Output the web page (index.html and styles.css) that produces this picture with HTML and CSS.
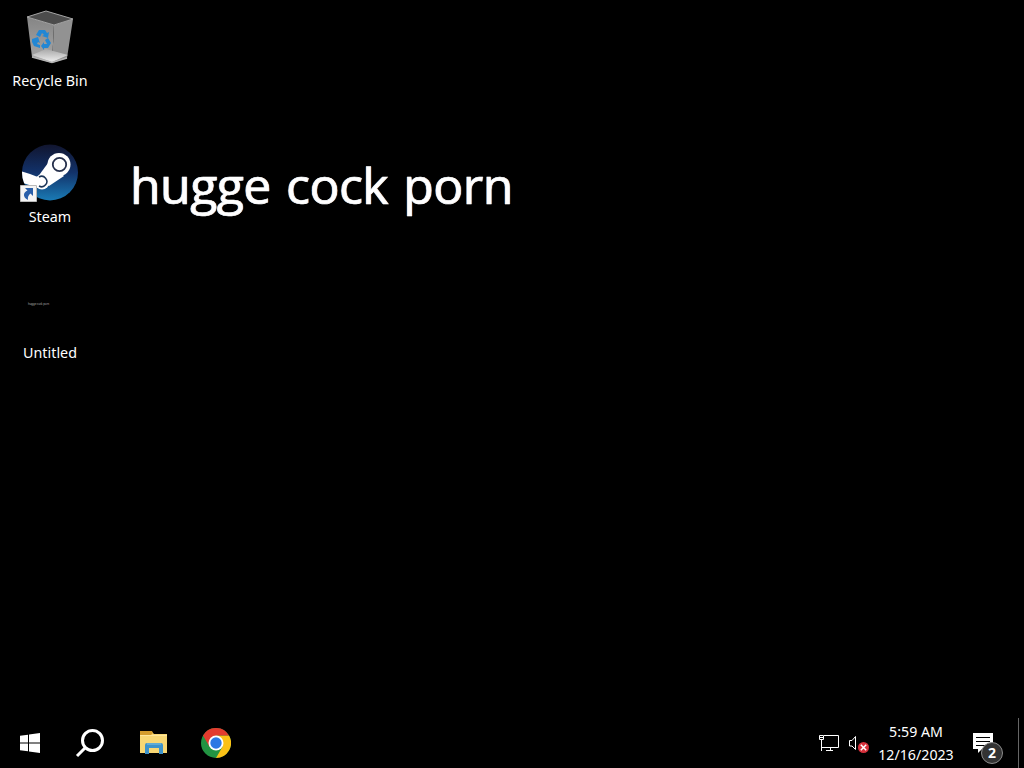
FILE: index.html
```
<!DOCTYPE html>
<html lang="en">

<head>
    <meta charset="UTF-8">
    <title>Desktop</title>
    <link rel="stylesheet" href="styles.css">
</head>

<body>
    <div class="desktop">
        <!-- desktop icons -->
        <div class="icons">
            <div class="icon">
                <svg class="icon-img" width="60" height="60" viewBox="0 0 60 60">
                    <defs>
                        <linearGradient id="binLeft" x1="0" y1="0" x2="0" y2="1">
                            <stop offset="0" stop-color="#858585" />
                            <stop offset="1" stop-color="#a9a9a9" />
                        </linearGradient>
                        <linearGradient id="binFloor" x1="0" y1="0" x2="0" y2="1">
                            <stop offset="0" stop-color="#a8a8a8" />
                            <stop offset="1" stop-color="#eeeeee" />
                        </linearGradient>
                    </defs>
                    <path d="M7 10 34 18 32 56 12 50Z" fill="url(#binLeft)" />
                    <path d="M34 18 53 12 47 51 32 56Z" fill="#929292" />
                    <path d="M7 10 26 4 53 12 34 18Z" fill="#4c4c4c" stroke="#a5a5a5" />
                    <path d="M12 48 26 42 48 48 32 55Z" fill="url(#binFloor)" />
                    <path d="M12 50 32 55.500 47 51" fill="none" stroke="#b4b4b4" stroke-width="1.500" />
                    <g fill="#2287d4">
                        <path d="M16 28 19 23 25 23 27 26 29 25 28 31 22 29 24 28 22 26 20 30Z" />
                        <path d="M12 32 18 30 20 36 18 35 17 37 20 38V41L14 39 12 35Z" />
                        <path d="M21 39 24 35 24 37 27 37 25 33 28 31 31 36 28 41 24 41 24 43Z" />
                    </g>
                </svg>
                <span class="icon-name">Recycle Bin</span>
            </div>
            <div class="icon">
                <svg class="icon-img" width="60" height="60" viewBox="0 0 60 60">
                    <defs>
                        <linearGradient id="steamBg" x1="0" y1="0" x2="0" y2="1">
                            <stop offset="0" stop-color="#11152f" />
                            <stop offset=".5" stop-color="#12326a" />
                            <stop offset="1" stop-color="#1a7bb5" />
                        </linearGradient>
                        <clipPath id="steamClip">
                            <circle cx="30" cy="29.500" r="28" />
                        </clipPath>
                    </defs>
                    <circle cx="30" cy="29.500" r="28" fill="url(#steamBg)" />
                    <g clip-path="url(#steamClip)">
                        <path d="M0 28 10 31 23 36 22 46 0 39Z" fill="#fff" />
                        <path d="M28 20 44 33 29 43 17 35Z" fill="#fff" />
                        <circle cx="22" cy="39" r="7.500" fill="#fff" />
                        <circle cx="39" cy="21.500" r="11.500" fill="#fff" />
                        <circle cx="39.500" cy="21.500" r="6.700" fill="none" stroke="#26304c" stroke-width="1.800" />
                        <path d="M19 34A5.200 5.200 0 1 1 19 43" fill="none" stroke="#1c3558" stroke-width="1.500" />
                    </g>
                    <!-- shortcut arrow -->
                    <path d="M.5 42.500h16v16H.5z" fill="#f4f4f4" stroke="#b9b9b9" />
                    <path d="M5 45h8v8l-2.500-2.500C8.500 52 7.500 54 8 57 2 54 3.500 49 7.500 47.500Z" fill="#2a5fa9" />
                </svg>
                <span class="icon-name">Steam</span>
            </div>
            <div class="icon">
                <div class="icon-img thumb">hugge cock porn</div>
                <span class="icon-name">Untitled</span>
            </div>
        </div>
        <!-- wallpaper text -->
        <div class="wallpaper">hugge cock porn</div>
    </div>

    <div class="taskbar">
        <div class="task start">
            <svg width="20" height="20" viewBox="0 0 20 20" fill="#fff">
                <path d="M0 2.800 8 1.700V9.500H0zM9 1.500 20 0V9.500H9zM0 10.500H8V18.300L0 17.200zM9 10.500H20V20L9 18.500z" />
            </svg>
        </div>
        <div class="task search">
            <svg width="30" height="30" viewBox="0 0 30 30" fill="none" stroke="#fff" stroke-width="3">
                <circle cx="17.500" cy="12.500" r="10" />
                <path d="M10.500 19.500 2 28" />
            </svg>
        </div>
        <div class="task explorer">
            <svg width="28" height="26" viewBox="0 0 28 26">
                <path d="M0 2h12l2 2h13v19H0z" fill="#f8d774" />
                <path d="M0 1h12l1 2-2 2H0z" fill="#d49c2c" />
                <path d="M0 5h27v1H0z" fill="#ffe69b" />
                <path d="M5 24V15q0-2 2-2h14q2 0 2 2v9h-4v-6H9v6z" fill="#3e93cb" />
                <path d="M7 13h14v2H7z" fill="#5fabd6" />
            </svg>
        </div>
        <div class="task chrome">
            <svg width="30" height="30" viewBox="0 0 30 30">
                <circle cx="15" cy="15" r="15" fill="#229342" />
                <path d="M15 7.500H28A15 15 0 0 1 15 30L21.500 18.750Z" fill="#fbc116" />
                <path d="M15 7.500H28A15 15 0 0 0 2 7.500L8.500 18.750Z" fill="#e33b2e" />
                <circle cx="15" cy="15" r="7.500" fill="#fff" />
                <circle cx="15" cy="15" r="5.700" fill="#2b78e4" />
            </svg>
        </div>

        <div class="tray">
            <svg class="network" width="21" height="18" viewBox="0 0 21 18" fill="none" stroke="#fff">
                <path d="M5 1.500H19.500V13.500H2.500V6M11.500 14v3M7 16.500h7M2.500 13v4" />
                <path d="M.5 1.500h4v4h-4zM1 3.500h3" />
            </svg>
            <svg class="volume" width="22" height="20" viewBox="0 0 22 20">
                <path d="M1.500 7.500H4L7.500 3.500V16.500L4 13H1.500z" fill="none" stroke="#fff" />
                <circle cx="15.500" cy="14.500" r="5.500" fill="#d5303b" />
                <path d="M12.800 11.800 18.200 17.200M18.200 11.800 12.800 17.200" stroke="#fff" stroke-width="1.500" />
            </svg>
            <div class="clock">
                <span class="time">5:59 AM</span>
                <span class="date">12/16/2023</span>
            </div>
            <div class="notice">
                <svg width="20" height="20" viewBox="0 0 20 20">
                    <path d="M0 0H20V16H9L5 20V16H0z" fill="#fff" />
                    <path d="M3 4.500H17M3 8.500H17M3 12.500H12" stroke="#000" />
                </svg>
                <span class="badge">2</span>
            </div>
            <div class="peek"></div>
        </div>
    </div>
</body>

</html>
```
FILE: styles.css
```
* {
    padding: 0;
    margin: 0;
    box-sizing: border-box;
}

body {
    display: flex;
    flex-direction: column;
    height: 768px;
    overflow: hidden;
    background: #000;
    color: #fff;
    font-family: "Noto Sans", "Open Sans", sans-serif;
}

svg {
    display: block;
}

.desktop {
    display: flex;
    flex: 1;
}

.icons {
    width: 100px;
    padding-top: 7px;
}

.icon {
    display: flex;
    flex-direction: column;
    align-items: center;
    height: 136px;
}

.icon-img {
    width: 60px;
    height: 60px;
}

.icon-name {
    margin-top: 4px;
    font-size: 14.300px;
    line-height: 20px;
    white-space: nowrap;
}

/* picture preview of the Untitled file */
.thumb {
    padding: 23px 0 0 8px;
    font-size: 2.700px;
    line-height: 4px;
    color: #bbb;
    white-space: nowrap;
}

.wallpaper {
    margin: 149px 0 0 30px;
    height: 72px;
    font-family: "Open Sans", sans-serif;
    font-size: 50px;
    letter-spacing: -.6px;
    word-spacing: 3px;
    line-height: 72px;
    white-space: nowrap;
    -webkit-text-stroke: .7px #fff;
    text-shadow: -1px 0 #1c4a78, 1px 0 #70401c;
}

/* taskbar */
.taskbar {
    display: flex;
    align-items: center;
    height: 50px;
}

.start {
    padding-left: 20px;
}

.search {
    padding-left: 35px;
}

.explorer {
    padding-left: 35px;
}

.chrome {
    padding-left: 33px;
}

.tray {
    display: flex;
    align-items: center;
    height: 50px;
    margin-left: auto;
}

.volume {
    margin-left: 8px;
}

.clock {
    display: flex;
    flex-direction: column;
    align-items: center;
    width: 76px;
    margin-left: 8px;
    font-size: 14.200px;
    line-height: 23px;
    white-space: nowrap;
}

.notice {
    position: relative;
    width: 20px;
    margin-left: 19px;
}

.badge {
    position: absolute;
    top: 9px;
    left: 8px;
    width: 22px;
    height: 22px;
    border: 1px solid #8c8c8c;
    border-radius: 50%;
    background: #333;
    font-size: 14px;
    font-weight: bold;
    line-height: 20px;
    text-align: center;
}

.peek {
    width: 6px;
    height: 50px;
    margin-left: 25px;
    border-left: 1px solid #666;
}
```
